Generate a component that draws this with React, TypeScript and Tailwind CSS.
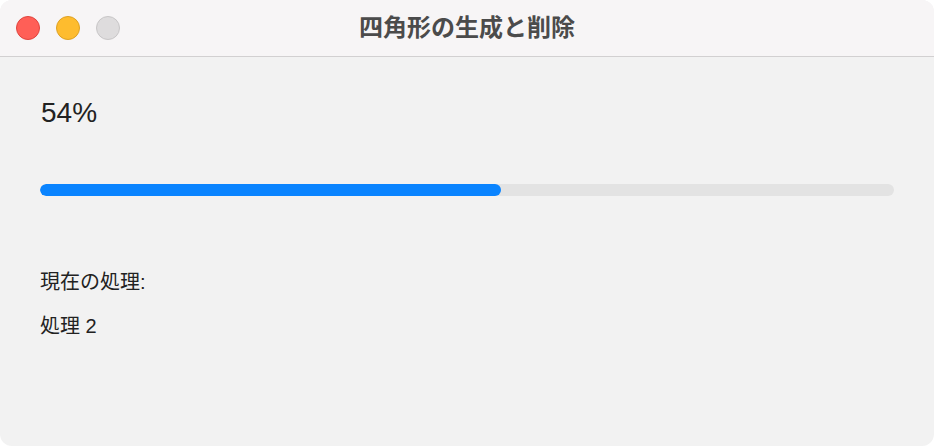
import React from 'react';

const progress = 54;

function TrafficLights() {
  return (
    <div className="absolute left-4 top-0 flex h-full items-center gap-4">
      <span className="h-6 w-6 rounded-full border border-[#e0443e] bg-[#ff5f57]" />
      <span className="h-6 w-6 rounded-full border border-[#dea123] bg-[#febc2e]" />
      <span className="h-6 w-6 rounded-full border border-[#c8c6c7] bg-[#dedcdd]" />
    </div>
  );
}

export default function App() {
  return (
    <div className="h-[446px] w-[934px] bg-white font-['Liberation_Sans','Noto_Sans_CJK_JP',sans-serif]">
      <div className="flex h-full flex-col overflow-hidden rounded-[12px] bg-[#f2f2f2]">
        {/* Title bar */}
        <div className="relative flex h-[57px] shrink-0 items-center justify-center border-b border-[#d2d0d1] bg-[#f7f5f6]">
          <TrafficLights />
          <h1 className="text-[24px] font-bold leading-none text-[#4b4b4b]">四角形の生成と削除</h1>
        </div>

        {/* Content */}
        <div className="flex flex-col px-10 pt-[40px] text-[#222222]">
          <p className="pl-px text-[28px] leading-[32px]">{progress}%</p>

          <div className="mt-[55px] h-3 w-full overflow-hidden rounded-full bg-[#e3e3e3]">
            <div className="h-full rounded-full bg-[#0a84ff]" style={{ width: `${progress}%` }} />
          </div>

          <p className="mt-[74px] text-[20px] leading-[24px]">現在の処理:</p>
          <p className="mt-[20px] text-[20px] leading-[24px]">処理 2</p>
        </div>
      </div>
    </div>
  );
}
